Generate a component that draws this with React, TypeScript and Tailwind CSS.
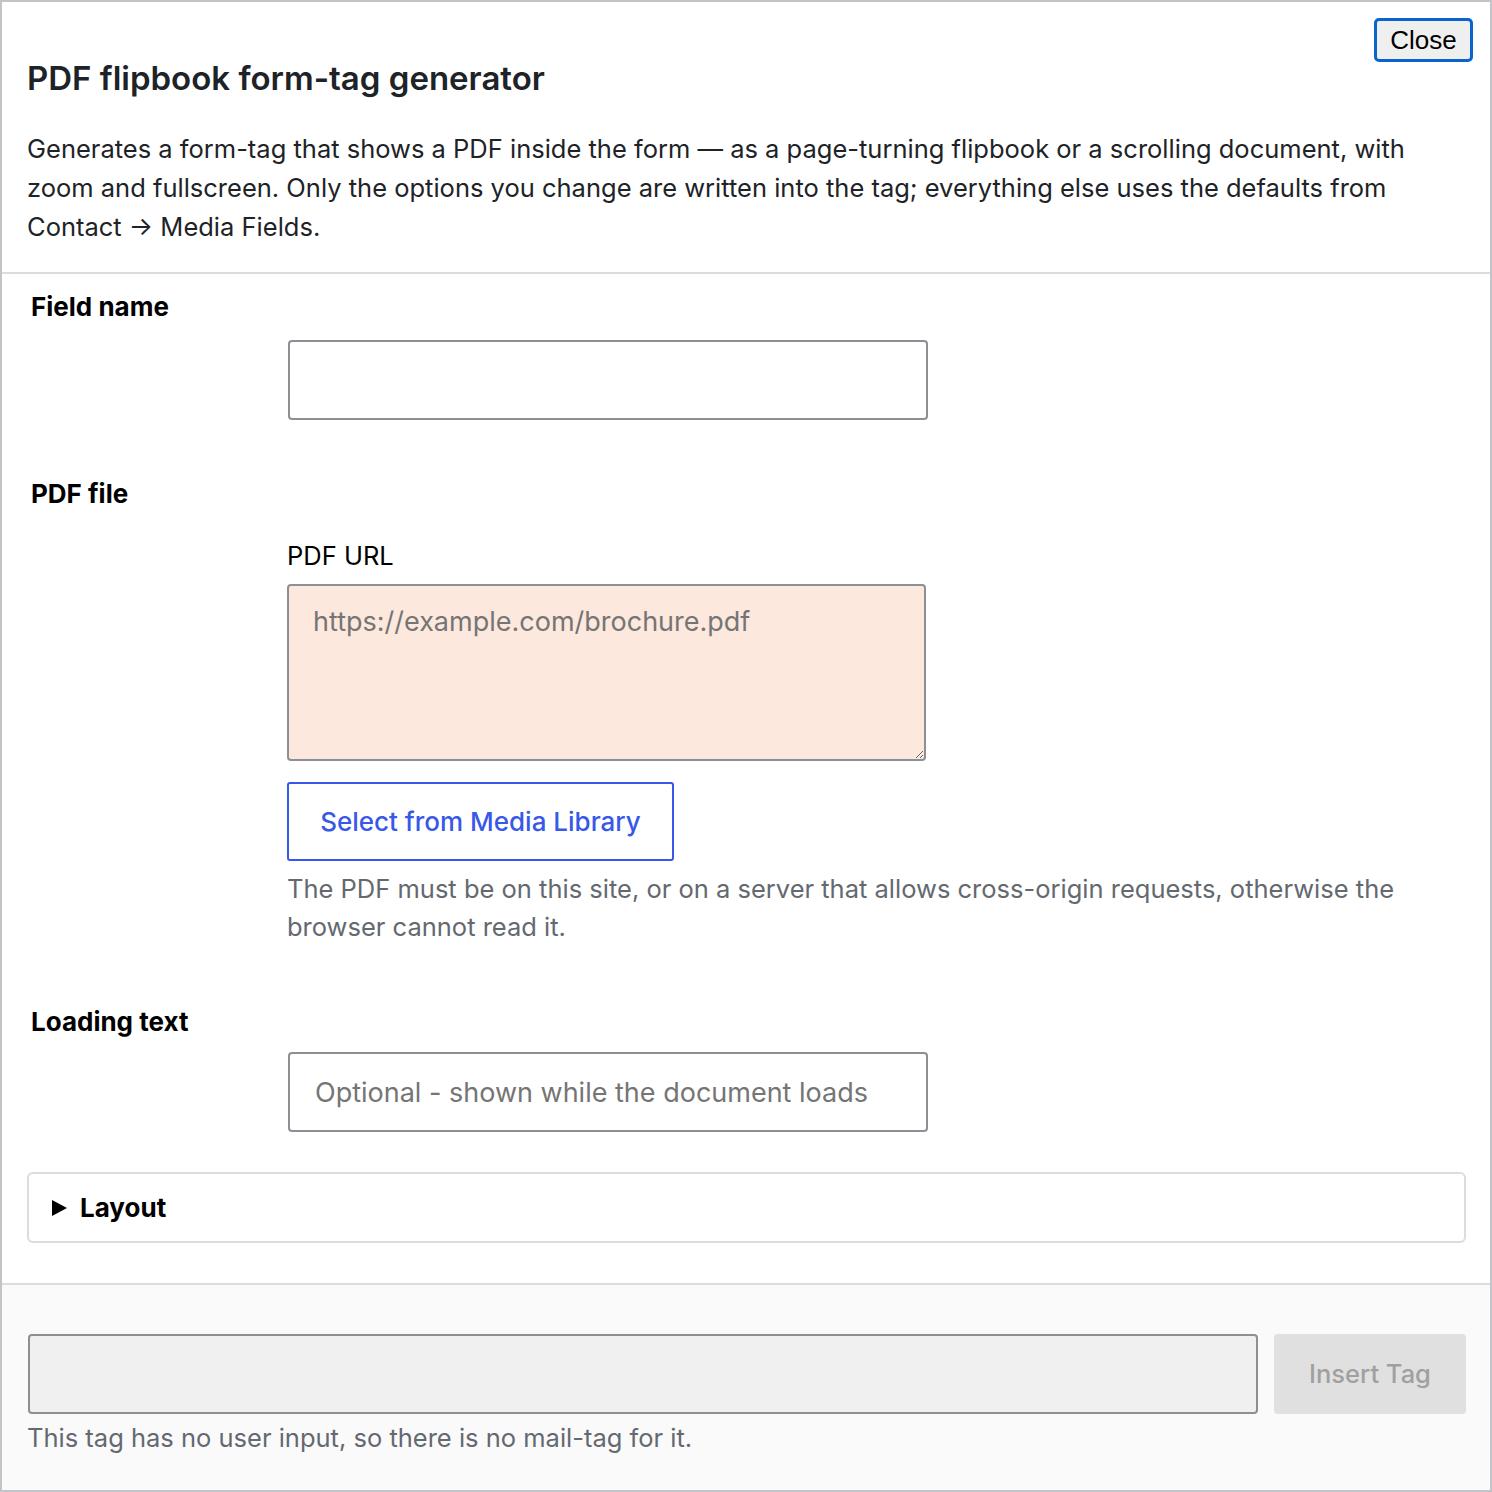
import React from "react";

export default function App() {
  const font = { fontFamily: "Inter, 'Noto Sans', sans-serif" };
  return (
    <div
      className="w-[1492px] h-[1492px] border-2 border-[#c3c4c7] bg-white flex flex-col text-[#1d2327]"
      style={font}
    >
      {/* Header */}
      <div className="relative px-[25px] pt-[56px] pb-[26px] border-b-2 border-[#dcdcde]">
        <button
          className="absolute top-[16px] right-[17px] w-[99px] h-[44px] rounded-[5px] border-[3px] border-[#0b63ce] bg-[#efefef] text-[26px] leading-none text-black"
          style={{ fontFamily: "'Liberation Sans', Arial, sans-serif" }}
        >
          Close
        </button>
        <h1 className="text-[33px] leading-[40px] font-semibold text-[#1d2327] m-0">
          PDF flipbook form-tag generator
        </h1>
        <p className="mt-[31px] text-[25.5px] leading-[39px] text-[#1d2327]">
          Generates a form-tag that shows a PDF inside the form — as a page-turning flipbook or a scrolling document, with
          zoom and fullscreen. Only the options you change are written into the tag; everything else uses the defaults from
          Contact → Media Fields.
        </p>
      </div>

      {/* Body */}
      <div className="flex-1 flex flex-col px-[25px] pt-[13px]">
        <div className="pl-[4px] text-[26px] leading-[39px] font-bold text-black">Field name</div>
        <div className="mt-[14px] pl-[261px]">
          <input
            type="text"
            className="w-[640px] h-[80px] rounded-[4px] border-2 border-[#8c8f94] bg-white px-[24px] text-[27px] outline-none"
          />
        </div>

        <div className="mt-[54px] pl-[4px] text-[26px] leading-[39px] font-bold text-black">PDF file</div>
        <div className="pl-[260px] flex flex-col">
          <div className="mt-[23px] text-[25.5px] leading-[39px] text-black">PDF URL</div>
          <textarea
            className="mt-[9px] w-[639px] h-[177px] rounded-[4px] border-2 border-[#8c8f94] bg-[#fde8dd] px-[24px] py-[18px] text-[27px] leading-[36px] placeholder:text-[#757575] outline-none"
            placeholder="https://example.com/brochure.pdf"
          />
          <div className="mt-[21px]">
            <button className="w-[387px] h-[79px] rounded-[3px] border-2 border-[#3858e9] bg-white text-[26px] font-medium text-[#3858e9]">
              Select from Media Library
            </button>
          </div>
          <p className="mt-[9px] text-[25.5px] leading-[38px] text-[#646970]">
            The PDF must be on this site, or on a server that allows cross-origin requests, otherwise the
            <br />
            browser cannot read it.
          </p>
        </div>

        <div className="mt-[56px] pl-[4px] text-[26px] leading-[39px] font-bold text-black">Loading text</div>
        <div className="mt-[11px] pl-[261px]">
          <input
            type="text"
            placeholder="Optional - shown while the document loads"
            className="w-[640px] h-[80px] rounded-[4px] border-2 border-[#8c8f94] bg-white px-[25px] text-[27px] placeholder:text-[#757575] outline-none"
          />
        </div>

        <div className="mt-[40px] h-[71px] w-[1439px] rounded-[6px] border-2 border-[#dcdcde] flex items-center pl-[23px] gap-[13px]">
          <svg width="15" height="16" viewBox="0 0 15 16" className="shrink-0">
            <polygon points="0,0 15,8 0,16" fill="#000" />
          </svg>
          <span className="text-[26px] leading-[39px] font-bold text-black">Layout</span>
        </div>
      </div>

      {/* Footer */}
      <div className="h-[207px] border-t-2 border-[#dcdcde] bg-[#fafafa] pl-[26px] pr-[24px] pt-[49px]">
        <div className="flex gap-[16px]">
          <input
            type="text"
            readOnly
            className="w-[1230px] h-[80px] rounded-[4px] border-2 border-[#8c8f94] bg-[#f0f0f0] outline-none"
          />
          <button className="w-[192px] h-[80px] rounded-[4px] bg-[#e0e0e0] text-[25.5px] font-medium text-[#a0a0a0]">
            Insert Tag
          </button>
        </div>
        <p className="mt-[5px] -ml-[1px] text-[25.5px] leading-[38px] text-[#646970]">
          This tag has no user input, so there is no mail-tag for it.
        </p>
      </div>
    </div>
  );
}
